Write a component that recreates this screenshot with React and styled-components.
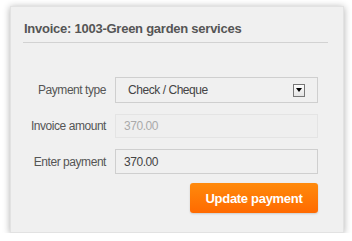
import React from "react"
import styled, {createGlobalStyle} from "styled-components"

const Global = createGlobalStyle`
  html, body { margin: 0; padding: 0; background: #fff; }
  body { font-family: "Liberation Sans", Arial, sans-serif; }
`

const
  Panel = styled.div`
    box-sizing: border-box;
    margin: 6px 0 0 10px;
    width: 334px;
    height: 227px;
    background: #f0f0f0;
    border: 1px solid #e2e2e2;
    box-shadow: 0 1px 7px rgba(0, 0, 0, .32);
    padding: 14px 15px 0 12px;
  `,
  Title = styled.h2`
    margin: 0;
    padding: 0 0 5px 1px;
    font-size: 13px;
    line-height: 16px;
    font-weight: bold;
    letter-spacing: -0.25px;
    color: #555;
    border-bottom: 1px solid #d2d2d2;
  `,
  Form = styled.div`
    display: grid;
    grid-template-columns: 83px 203px;
    column-gap: 9px;
    row-gap: 11px;
    margin-top: 34px;
    align-items: center;
  `,
  Label = styled.label`
    text-align: right;
    font-size: 12px;
    letter-spacing: -0.45px;
    color: ${p => p.muted ? "#666" : "#555"};
  `,
  Field = styled.div`
    box-sizing: border-box;
    height: ${p => p.h}px;
    border: 1px solid ${p => p.disabled ? "#e4e4e4" : "#cfcfcf"};
    background: ${p => p.disabled ? "#efefef" : "#f0f0f0"};
    display: flex;
    align-items: center;
    padding: 0 12px 0 ${p => p.pad}px;
    font-size: 12px;
    letter-spacing: -0.45px;
    color: ${p => p.disabled ? "#aaa" : "#444"};
  `,
  Value = styled.span`
    flex: 1;
  `,
  Arrow = styled.span`
    box-sizing: border-box;
    width: 12px;
    height: 13px;
    border: 1px solid #777;
    background: linear-gradient(#fdfdfd, #e4e4e4);
    display: flex;
    align-items: center;
    justify-content: center;
  `,
  Actions = styled.div`
    display: flex;
    justify-content: flex-end;
    margin: 9px 10px 0 0;
  `,
  Button = styled.button`
    width: 128px;
    height: 30px;
    border: 0;
    border-radius: 3px;
    background: linear-gradient(#ff8a0c, #ff6a00);
    color: #fff;
    font-family: "Liberation Sans", Arial, sans-serif;
    font-size: 13px;
    font-weight: bold;
    letter-spacing: -0.3px;
    box-shadow: 0 1px 2px rgba(0, 0, 0, .15);
  `

export default function App() {
  return <>
    <Global />
    <Panel>
      <Title>Invoice: 1003-Green garden services</Title>
      <Form>
        <Label>Payment type</Label>
        <Field h={26} pad={12}>
          <Value>Check / Cheque</Value>
          <Arrow>
            <svg width="6" height="4" viewBox="0 0 6 4"><path d="M0 0h6L3 4z" fill="#000" /></svg>
          </Arrow>
        </Field>
        <Label>Invoice amount</Label>
        <Field h={24} pad={8} disabled>370.00</Field>
        <Label>Enter payment</Label>
        <Field h={25} pad={8}>370.00</Field>
      </Form>
      <Actions>
        <Button>Update payment</Button>
      </Actions>
    </Panel>
  </>
}
